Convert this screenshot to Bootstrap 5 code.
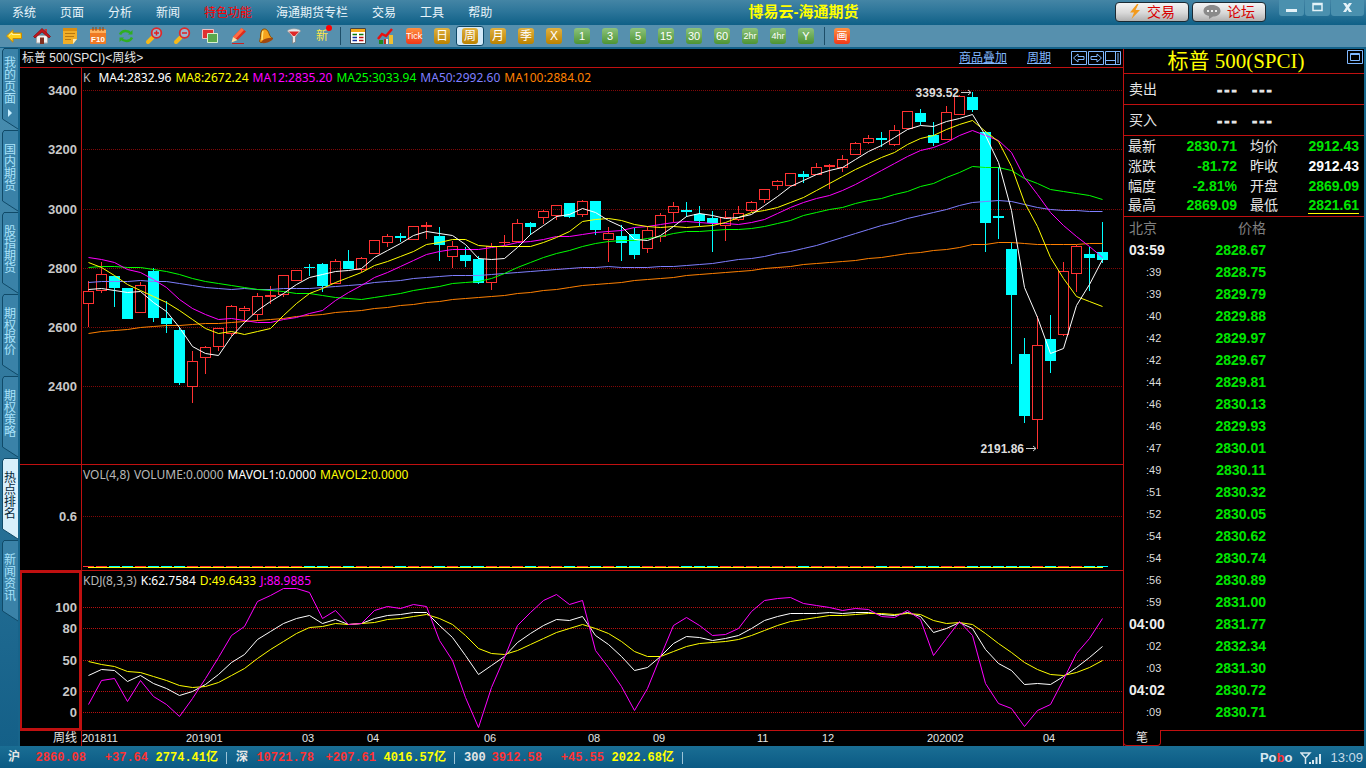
<!DOCTYPE html>
<html lang="zh-CN">
<head>
<meta charset="utf-8">
<meta name="viewport" content="width=device-width, initial-scale=1">
<title>博易云-海通期货</title>
<link href="https://cdn.jsdelivr.net/npm/bootstrap@5.3.0/dist/css/bootstrap.min.css" rel="stylesheet">
<style>
:root{--line:#c01010;--up:#ff3232;--down:#00ffff;--ink:#e6e6e6;--green:#00e600;--frame:#17688d}
body{font-family:"Liberation Sans","Noto Sans CJK SC",sans-serif;font-size:12px;line-height:16px;background:var(--frame);color:var(--ink)}
button{font:inherit;color:inherit;background:none;border:0;padding:0}
a{color:inherit;text-decoration:none}
.titlebar{height:25px;background:linear-gradient(#4485a5,#2d769a 45%,#0f6087)}
.menu-items{gap:24px;padding-left:12px}
.menu-items a{font-size:12px;color:#e8f4fa}
.menu-items a.hot{color:#f00}
.app-title{font-size:15px;font-weight:700;color:#ff0;line-height:24px;margin:0}
.pill{width:74px;height:20px;margin-top:2px;margin-right:3px;border:1px solid #1b2a33;border-radius:4px;background:linear-gradient(#f4f4f4,#d8d8d8 55%,#b0b0b0);color:#d80000;font-size:14px;line-height:18px;gap:6px}
.win-ctl{margin-left:10px;gap:1px;margin-right:2px}
.win-ctl button{width:25px;height:16px;background:#4a90ae;border-radius:0 0 3px 3px}
.win-ctl button:last-child{width:33px}
.toolbar{height:24px;background:#5690ae;border-bottom:2px solid #14628a}
.toolbar button{width:28px;height:20px;margin-top:1px;border:1px solid transparent;border-radius:3px}
.toolbar button.on{background:#d3e9f8;border-color:#0d4766}
.toolbar svg{width:18px;height:18px}
.tile{width:16px;height:16px;border-radius:3px;color:#fff;font-size:11px;line-height:16px;text-align:center;background:linear-gradient(#8cc27c,#4d9434)}
.tile.gold{background:linear-gradient(#e0b040,#bb8200);font-size:12px}
.tile.red{background:linear-gradient(#ff9040,#f03818)}
.tile.slim{font-size:9px}
.new-mark{font-size:12px;color:#ffe84a}
.new-mark i{right:-4px;top:-3px;width:6px;height:6px;background:#f00}
.tool-sep{width:8px;height:18px;margin-top:2px}
.tool-sep::before{content:"";display:block;width:1px;height:100%;margin:0 auto;background:#1d4e68}
.rail{width:20px;margin-top:-1px;background:linear-gradient(#4c90b2,#146088);border-right:2px solid #17648a}
.rail a{width:17px;height:82px;margin-left:1px;padding:14px 2px 0 3px;color:#a9e2fb;line-height:12px;word-break:break-all;
background:url("data:image/svg+xml,%3Csvg xmlns='http://www.w3.org/2000/svg' width='17' height='82'%3E%3Cpath d='M17 .5H3L1.500 3V71L17 81' fill='%233a82a8' stroke='%23104a68'/%3E%3C/svg%3E") no-repeat}
.rail a:first-child{padding-top:9px}
.rail a span{display:block;width:12px}
.rail a.on{color:#062a3c;background-image:url("data:image/svg+xml,%3Csvg xmlns='http://www.w3.org/2000/svg' width='17' height='82'%3E%3Cpath d='M17 .5H3L1.500 3V71L17 81' fill='%23d8effb' stroke='%23104a68'/%3E%3C/svg%3E")}
.board{background:#000}
.chart-head{height:19px;border-bottom:1px solid var(--line);padding:0 1px 0 2px}
.chart-head a{color:#80b8ff;text-decoration:underline}
.pane{display:flex;flex-basis:0;min-height:0;border-bottom:1px solid var(--line)}
.pane-k{flex-grow:396}.pane-vol{flex-grow:105}.pane-kdj{flex-grow:159}
.scale{width:61px;flex:none;font-weight:700;font-size:13px;color:#c8c8c8}
.scale span{right:4px;transform:translateY(-50%)}
.pane-kdj .scale{box-shadow:inset 0 0 0 2px var(--line)}
.plot{border-left:1px solid var(--line);min-width:0}
.plot svg{position:absolute;inset:0;width:100%;height:100%}
.legend{position:absolute;left:1px;top:2px;gap:4px;font-family:"Noto Sans","Open Sans",sans-serif;font-size:12px;color:#b8b8b8;white-space:nowrap}
.peak{position:absolute;transform:translate(-100%,-50%);font-weight:700;color:#ddd}
.axis{height:15px;line-height:15px;font-size:11px}
.axis .lead-cell{width:61px;padding-right:4px;font-size:12px}
.axis .dates span{position:absolute}
.quote{width:241px;border-left:1px solid var(--line);margin-right:2px}
.quote-title{height:25px;border-bottom:1px solid var(--line);font-family:"Liberation Serif","Noto Sans CJK SC",serif;font-size:21px;line-height:24px;color:#ff0}
.quote-title button{right:1px;top:1px}
.bid{height:31px;border-bottom:1px solid var(--line);padding-left:5px;font-size:14px}
.bid b{font-family:"DejaVu Sans Mono",monospace;font-size:12px;width:35px;padding-top:4px;-webkit-text-stroke:1px}
.bid span{width:87px}
.facts{width:100%;border-bottom:1px solid var(--line);font-size:14px;table-layout:fixed}
.facts th{font-weight:400;padding:0}
.facts td{font-weight:700;text-align:right;padding:0;color:var(--green)}
.facts tr{height:20px;line-height:19px}
.facts .lowest{border-bottom:1px solid #ff0}
.ticks{table-layout:fixed;font-size:14px;width:100%}
.ticks tr{height:22px}
.ticks th,.ticks td{padding:0 0 0 5px;line-height:22px}
.ticks thead th{font-weight:400;color:#808080}
.ticks td:first-child{font-size:11px;padding-left:22px;color:#ddd}
.ticks td.minute{font-size:14px;font-weight:700;padding-left:5px;color:#eee}
.ticks td:nth-child(2){color:var(--green);font-weight:700}
.ticks th:nth-child(2),.ticks td:nth-child(2){text-align:right}
.quote-foot{height:16px}
.quote-foot button{width:38px;margin-left:-1px;border:1px solid var(--line);border-top:0;border-radius:0 0 4px 4px;line-height:14px}
.quote-foot div{border-top:1px solid var(--line)}
.status{height:22px;background:linear-gradient(#1a6e94,#0b5a84);font-family:"Liberation Mono","Noto Sans CJK SC",monospace;font-weight:700;padding:2px 0 0 8px}
.index{display:grid;grid-template-columns:20px 58px 62px 70px;text-align:right;padding-right:8px;margin-right:9px;line-height:12px;border-right:1px solid #9cc4d8}
.index span:first-child{text-align:left}
.rise{color:var(--up)}.sum{color:#ff0}
.status .brand{font-family:"Liberation Sans",sans-serif;font-size:13px;color:#d8e8f0}
.status .clock{font-family:"Liberation Sans",sans-serif;font-size:13px;font-weight:400;color:#c8dce8;margin-right:3px}
</style>
</head>
<body class="d-flex flex-column min-vh-100">
<header>
<div class="titlebar d-flex">
<nav class="menu-items d-flex align-items-center"><a href="#">系统</a><a href="#">页面</a><a href="#">分析</a><a href="#">新闻</a><a href="#" class="hot">特色功能</a><a href="#">海通期货专栏</a><a href="#">交易</a><a href="#">工具</a><a href="#">帮助</a></nav>
<h1 class="app-title flex-grow-1 text-center">博易云-海通期货</h1>
<button class="pill d-flex align-items-center justify-content-center"><svg width="12" height="16" viewBox="0 0 12 16"><path d="M8 0 1 8.500h4L2.500 15 11 6H6.500L9.500 0z" fill="#f39a1c"/></svg>交易</button>
<button class="pill d-flex align-items-center justify-content-center"><svg width="18" height="14" viewBox="0 0 18 14"><path d="M9 0c5 0 8.500 2.500 8.500 6S14 11.500 10 11.500L6 14v-3C2.500 10.500.5 8.500.5 6 .5 2.500 4 0 9 0z" fill="#8a8a8a"/><path d="M4 5h2v2H4zM8 5h2v2H8zM12 5h2v2h-2z" fill="#eee"/></svg>论坛</button>
<div class="win-ctl d-flex">
<button aria-label="最小化" class="d-flex justify-content-center"><svg width="11" height="14"><path d="M0 9h11v3H0z" fill="#e4f2f8"/></svg></button>
<button aria-label="最大化" class="d-flex justify-content-center"><svg width="11" height="14"><path d="M1 3.500h9v7H1zM1 4.500h9" fill="none" stroke="#e4f2f8" stroke-width="1.500"/></svg></button>
<button aria-label="关闭" class="d-flex justify-content-center"><svg width="11" height="14"><path d="M1 3h3l1.500 2L7 3h3L7 7.500l3 4.500H7L5.500 9.500 4 12H1l3-4.500z" fill="#e4f2f8"/></svg></button>
</div>
</div>
<div class="toolbar d-flex" role="toolbar">
<button aria-label="后退" class="d-flex align-items-center justify-content-center"><svg viewBox="0 0 18 18"><path d="M1.500 9 8 2.800V6h8.500v5.500H8v3.700z" fill="#ffd21e" stroke="#c98a00"/><path d="M4 8.500 7 6v1.500h8" stroke="#fff3a0" fill="none"/></svg></button>
<button aria-label="首页" class="d-flex align-items-center justify-content-center"><svg viewBox="0 0 18 18"><path d="M3.500 8.500h11V16h-11z" fill="#f2f2f2" stroke="#aaa"/><path d="M11.500 2h2.500v5h-2.500z" fill="#c33"/><path d="M.5 9.500 9 1.500l8.500 8-1.500 1.500L9 5l-7 6z" fill="#c4161c" stroke="#7c0c10" stroke-width=".7"/><path d="M7 10.500h4V17H7z" fill="#803020"/></svg></button>
<button aria-label="笔记" class="d-flex align-items-center justify-content-center"><svg viewBox="0 0 18 18"><path d="M2 1h14v11l-4 5H2z" fill="#f2ae28"/><path d="M2 1h14v3H2z" fill="#d98c10"/><path d="M16 12h-4v5z" fill="#ffe9ae"/><path d="M4 6.500h10M4 9.500h9M4 12.500h6" stroke="#b87810"/></svg></button>
<button aria-label="F10" class="d-flex align-items-center justify-content-center"><svg viewBox="0 0 18 18"><rect x="1" y="2" width="16" height="15" rx="1" fill="#ef7a24"/><path d="M1 3h16v3H1z" fill="#ffb25e"/><path d="M4 0v4M7 0v4M11 0v4M14 0v4" stroke="#984408"/><text x="9" y="14.500" text-anchor="middle" font-size="8" font-weight="700" fill="#fff">F10</text></svg></button>
<button aria-label="刷新" class="d-flex align-items-center justify-content-center"><svg viewBox="0 0 18 18" fill="none" stroke="#2fae22" stroke-width="2.500"><path d="M3 7.500C5 3 11 3 14 6.500M15 10.500c-2 4.500-8 4.500-11 1"/><path d="M15.500 3v4.500H11zM2.500 15v-4.500H7z" fill="#2fae22" stroke="none"/></svg></button>
<button aria-label="放大" class="d-flex align-items-center justify-content-center"><svg viewBox="0 0 18 18"><path d="m7.500 10.500-4.500 4.500" stroke="#f7b818" stroke-width="4" stroke-linecap="round"/><circle cx="11.500" cy="6" r="4.800" fill="#9ab6cc" stroke="#e02828" stroke-width="1.800"/><path d="M9 6h5M11.500 3.500v5" stroke="#e02020" stroke-width="1.500"/></svg></button>
<button aria-label="缩小" class="d-flex align-items-center justify-content-center"><svg viewBox="0 0 18 18"><path d="m7.500 10.500-4.500 4.500" stroke="#f7b818" stroke-width="4" stroke-linecap="round"/><circle cx="11.500" cy="6" r="4.800" fill="#9ab6cc" stroke="#e02828" stroke-width="1.800"/><path d="M9 6h5" stroke="#e02020" stroke-width="1.500"/></svg></button>
<button aria-label="叠加" class="d-flex align-items-center justify-content-center"><svg viewBox="0 0 18 18"><path d="M1.500 2.500h11v9h-11z" fill="#e03030" stroke="#eec0c0"/><path d="M6.500 6.500h10v9h-10z" fill="#5aa84c" stroke="#d8f0d0"/></svg></button>
<button aria-label="画线" class="d-flex align-items-center justify-content-center"><svg viewBox="0 0 18 18"><path d="M12.500 1 17 4.500 8.500 13 4 10z" fill="#e02c1c"/><path d="M12.500 1 15 3 6.500 12 4 10z" fill="#ff6c44"/><path d="m4 10 4.500 3-6 2.500z" fill="#ffe0a0"/><path d="M3 16.500h12" stroke="#d02020"/></svg></button>
<button aria-label="预警" class="d-flex align-items-center justify-content-center"><svg viewBox="0 0 18 18"><path d="M5 3c3-2.500 6 0 7 3.500 1 3 2 4 4 5L5 15.500c-2 .5-3-1-2-3C4 10 3 6 5 3z" fill="#f5a21c" stroke="#8a4a00"/><path d="M6 4c-1 3-.5 6-1 9" stroke="#ffe070" stroke-width="1.500" fill="none"/><ellipse cx="10" cy="13.500" rx="6" ry="2" transform="rotate(-18 10 13.500)" fill="#a04810"/></svg></button>
<button aria-label="筛选" class="d-flex align-items-center justify-content-center"><svg viewBox="0 0 18 18"><path d="M3 4.500 7.500 10v6.500l3-1.500v-5L15 4.500z" fill="#e6e6e6" stroke="#777" stroke-width=".7"/><ellipse cx="9" cy="4" rx="6.500" ry="2.200" fill="#e8e8e8" stroke="#999" stroke-width=".6"/><path d="M4 4.500h10L10 9H8z" fill="#e02828"/></svg></button>
<button class="d-flex align-items-center justify-content-center"><span class="new-mark position-relative">新<i class="position-absolute rounded-circle"></i></span></button>
<span class="tool-sep"></span>
<button aria-label="报价" class="d-flex align-items-center justify-content-center"><svg viewBox="0 0 18 18"><path d="M1.500 1.500h15v15h-15z" fill="#fff" stroke="#444"/><path d="M2 2h14v3H2z" fill="#f5a818"/><path d="M3.500 7.500H8" stroke="#087a08" stroke-width="1.500"/><path d="M10 7.500h4.500" stroke="#087a08" stroke-width="1.500"/><path d="M3.500 10.500H8M3.500 13.500H8" stroke="#1030a0" stroke-width="1.500"/><path d="M10 10.500h4.500M10 13.500h4.500" stroke="#c01010" stroke-width="1.500"/></svg></button>
<button aria-label="走势" class="d-flex align-items-center justify-content-center"><svg viewBox="0 0 18 18"><path d="M2 13h4v4H2z" fill="#208820"/><path d="M7 12h4v5H7z" fill="#c03020"/><path d="M9 12h2v5H9z" fill="#e8e8e8"/><path d="M12 8h4v9h-4z" fill="#f0c030"/><path d="m1 12 4-5 4 2 6-7" fill="none" stroke="#e81010" stroke-width="2.500"/></svg></button>
<button class="d-flex align-items-center justify-content-center"><span class="tile red slim">Tick</span></button>
<button class="d-flex align-items-center justify-content-center"><span class="tile gold">日</span></button>
<button class="on d-flex align-items-center justify-content-center"><span class="tile gold">周</span></button>
<button class="d-flex align-items-center justify-content-center"><span class="tile gold">月</span></button>
<button class="d-flex align-items-center justify-content-center"><span class="tile gold">季</span></button>
<button class="d-flex align-items-center justify-content-center"><span class="tile gold">X</span></button>
<button class="d-flex align-items-center justify-content-center"><span class="tile">1</span></button>
<button class="d-flex align-items-center justify-content-center"><span class="tile">3</span></button>
<button class="d-flex align-items-center justify-content-center"><span class="tile">5</span></button>
<button class="d-flex align-items-center justify-content-center"><span class="tile">15</span></button>
<button class="d-flex align-items-center justify-content-center"><span class="tile">30</span></button>
<button class="d-flex align-items-center justify-content-center"><span class="tile">60</span></button>
<button class="d-flex align-items-center justify-content-center"><span class="tile slim">2hr</span></button>
<button class="d-flex align-items-center justify-content-center"><span class="tile slim">4hr</span></button>
<button class="d-flex align-items-center justify-content-center"><span class="tile">Y</span></button>
<span class="tool-sep"></span>
<button class="d-flex align-items-center justify-content-center"><span class="tile red">画</span></button>
</div>
</header>

<main class="d-flex flex-grow-1">
<nav class="rail flex-shrink-0">
<a href="#" class="d-block"><span>我的页面</span><svg class="d-block mt-1" width="10" height="8"><path d="M4 0l4 4-4 4z" fill="#c8efff"/></svg></a>
<a href="#" class="d-block"><span>国内期货</span></a>
<a href="#" class="d-block"><span>股指期货</span></a>
<a href="#" class="d-block"><span>期权报价</span></a>
<a href="#" class="d-block"><span>期权策略</span></a>
<a href="#" class="d-block on"><span>热点排名</span></a>
<a href="#" class="d-block"><span>新闻资讯</span></a>
</nav>

<section class="board flex-grow-1 d-flex flex-column">
<div class="chart-head d-flex align-items-center">
<span class="me-auto">标普 500(SPCI)&lt;周线&gt;</span>
<a href="#" class="me-3 pe-1">商品叠加</a>
<a href="#" class="me-3 pe-1">周期</a>
<svg width="51" height="16" fill="none" stroke="#80b8ff"><path d="M.5 1.500h15v13H.5zM17.500 1.500h15v13h-15zM34.500 1.500h15v13h-15zM34.500 10.500h10M44.500 2v12M47 3v10" /><path d="M2.500 8 7 4v2.500h6v3H7V12zM30.500 8 26 4v2.500h-6v3h6V12z"/></svg>
</div>
<div class="pane pane-k">
<div class="scale position-relative" data-scale="k"></div>
<div class="plot position-relative flex-grow-1">
<svg id="plotK" viewBox="82 68 1041 396" preserveAspectRatio="none"></svg>
<div class="legend d-flex"><span class="me-1">K</span><span style="color:#fff">MA4:2832.96</span><span style="color:#ff0">MA8:2672.24</span><span style="color:#f0f">MA12:2835.20</span><span style="color:#0f0">MA25:3033.94</span><span style="color:#7f7fff">MA50:2992.60</span><span style="color:#ff8000">MA100:2884.02</span></div>
</div>
</div>
<div class="pane pane-vol">
<div class="scale position-relative" data-scale="vol"></div>
<div class="plot position-relative flex-grow-1">
<svg id="plotVol" viewBox="82 465 1041 105" preserveAspectRatio="none"></svg>
<div class="legend d-flex"><span>VOL(4,8)</span><span>VOLUME:0.0000</span><span style="color:#fff">MAVOL1:0.0000</span><span style="color:#ff0">MAVOL2:0.0000</span></div>
</div>
</div>
<div class="pane pane-kdj">
<div class="scale position-relative" data-scale="kdj"></div>
<div class="plot position-relative flex-grow-1">
<svg id="plotKdj" viewBox="82 571 1041 159" preserveAspectRatio="none"></svg>
<div class="legend d-flex"><span>KDJ(8,3,3)</span><span style="color:#fff">K:62.7584</span><span style="color:#ff0">D:49.6433</span><span style="color:#f0f">J:88.9885</span></div>
</div>
</div>
<div class="axis d-flex"><div class="lead-cell text-end">周线</div><div class="dates plot position-relative flex-grow-1" id="dates"></div></div>
</section>

<aside class="quote board flex-shrink-0 d-flex flex-column">
<div class="quote-title position-relative text-center"><span class="pe-3">标普 500(SPCI)</span><button aria-label="展开" class="position-absolute d-flex"><svg width="16" height="14" fill="none" stroke="#80b8ff"><path d="M.5.500h15v13H.5zM3.500 3.500h9v7h-9zM3.500 4.500h9"/></svg></button></div>
<div class="bid d-flex align-items-center"><span>卖出</span><b>---</b><b>---</b></div>
<div class="bid d-flex align-items-center"><span>买入</span><b>---</b><b>---</b></div>
<table class="facts">
<colgroup><col style="width:43px"><col style="width:70px"><col style="width:13px"><col style="width:40px"><col style="width:69px"><col></colgroup>
<tr><th class="ps-1">最新</th><td>2830.71</td><td></td><th>均价</th><td>2912.43</td><td></td></tr>
<tr><th class="ps-1">涨跌</th><td>-81.72</td><td></td><th>昨收</th><td class="text-white">2912.43</td><td></td></tr>
<tr><th class="ps-1">幅度</th><td>-2.81%</td><td></td><th>开盘</th><td>2869.09</td><td></td></tr>
<tr><th class="ps-1">最高</th><td>2869.09</td><td></td><th>最低</th><td><span class="lowest">2821.61</span></td><td></td></tr>
</table>
<table class="ticks"><colgroup><col style="width:72px"><col style="width:70px"><col></colgroup><thead><tr><th>北京</th><th>价格</th><th></th></tr></thead><tbody id="ticks"></tbody></table>
<div class="quote-foot d-flex mt-auto"><button>笔</button><div class="flex-grow-1"></div></div>
</aside>
</main>

<footer class="status d-flex align-items-center">
<div class="index"><span>沪</span><span class="rise">2860.08</span><span class="rise">+37.64</span><span class="sum">2774.41亿</span></div>
<div class="index"><span>深</span><span class="rise">10721.78</span><span class="rise">+207.61</span><span class="sum">4016.57亿</span></div>
<div class="index"><span>300</span><span class="rise">3912.58</span><span class="rise">+45.55</span><span class="sum">2022.68亿</span></div>
<span class="brand ms-auto">Po<span class="rise">b</span>o</span>
<svg class="mx-2" width="22" height="14" fill="none" stroke="#d8e8f0" stroke-width="1.500"><path d="M1 2h9L5.500 7zM5.500 7v6"/><path d="M10 13v-2M13 13V9M16.500 13V6M20 13V3" stroke-width="2"/></svg>
<span class="clock">13:09</span>
</footer>

<script src="https://cdn.jsdelivr.net/npm/bootstrap@5.3.0/dist/js/bootstrap.bundle.min.js"></script>
<script>
// Candles: direction (r rising, c falling), body top, body bottom, high, low
const candles = `r 291 303 281 326|r 274 290 262 292|c 276 287 276 306|c 288 318 288 318|r 285 312 282 312|c 271 317 268 321|c 318 323 301 332|c 330 382 327 384|r 361 386 351 402|r 347 357 346 373|r 328 346 328 350|r 306 333 305 335|r 308 310 306 321|r 296 314 293 320|r 295 296 286 303|r 275 294 275 296|r 270 280 270 280|c 267 267 264 275|c 264 285 263 291|r 261 283 259 283|c 261 268 250 268|r 258 269 257 271|r 240 253 240 253|r 236 242 234 246|c 236 237 233 241|r 226 239 226 239|r 225 226 222 238|c 236 244 227 260|r 246 256 241 267|c 255 260 247 266|c 259 282 256 283|r 246 282 243 289|r 242 242 235 245|r 223 241 219 241|c 223 226 222 234|r 211 217 210 223|r 205 215 205 219|c 203 216 203 217|r 201 214 200 216|c 201 229 201 234|r 233 239 227 261|c 236 242 225 260|c 234 254 228 258|r 230 248 226 252|r 215 236 213 241|r 206 212 202 221|c 210 211 202 216|c 214 220 206 225|c 218 222 211 251|r 217 225 211 240|r 213 219 206 220|r 202 210 201 211|r 189 199 189 202|r 181 185 180 189|r 173 185 173 185|c 174 176 171 182|r 167 174 163 174|r 165 166 164 188|r 159 167 155 171|r 143 154 142 154|r 138 142 135 143|c 138 139 132 146|r 130 144 125 145|r 111 128 111 128|c 113 121 109 124|c 135 142 122 145|r 112 139 106 139|r 96 114 95 114|c 97 109 92 111|c 132 222 131 251|c 216 217 167 238|c 249 294 242 363|c 354 415 338 422|r 345 419 316 448|c 339 360 315 372|r 271 334 262 335|r 246 273 245 291|c 254 257 247 290|c 252 259 222 262`.split('|').map(s => s.split(' '));
const averages = {
'#ff8000':'333 331 330 329 327 326 325 325 324 323 323 322 321 320 319 318 316 315 314 312 311 310 308 307 305 304 302 301 299 298 297 296 295 293 292 290 289 287 285 284 283 282 280 279 278 277 275 274 273 272 271 270 268 267 266 264 263 262 261 260 258 257 255 253 252 250 249 247 244 244 242 242 243 244 244 244 244 243 243',
'#7f7fff':'282 281 281 281 280 281 281 283 285 287 288 289 288 289 289 288 288 288 287 286 285 284 282 281 280 278 277 276 275 275 275 274 273 272 271 270 269 268 267 267 266 267 267 267 266 266 265 264 263 261 259 258 256 253 251 248 245 241 237 233 229 225 222 218 215 212 209 205 202 201 200 201 204 207 209 210 210 211 211',
'#00ff00':'267 266 266 267 267 269 271 274 278 281 283 285 287 289 290 291 293 293 295 297 298 299 297 295 293 290 288 286 283 282 281 278 273 267 262 257 253 250 246 243 241 240 240 238 236 233 231 231 230 229 229 228 226 223 220 215 212 209 207 203 200 198 194 191 186 183 177 172 166 167 167 170 178 183 189 191 193 195 199',
'#ff00ff':'257 259 262 269 272 279 287 299 308 314 319 318 320 322 322 319 317 313 310 300 292 285 277 272 266 260 254 251 249 249 249 247 245 242 241 239 236 236 234 232 231 230 227 226 224 222 221 222 223 223 224 222 219 213 207 202 198 195 190 184 177 170 163 156 150 147 142 135 130 135 140 152 177 194 212 225 236 246 257',
'#ffff00':'262 267 275 284 290 296 302 310 319 328 333 331 334 331 328 315 303 293 288 282 277 272 265 261 256 251 244 242 239 239 245 246 246 246 246 242 237 231 221 219 218 220 224 226 227 226 227 226 225 222 217 212 210 207 202 197 190 183 176 169 163 157 152 144 138 135 129 124 120 131 141 166 202 226 257 278 296 301 306',
'#ffffff':'289 288 290 292 291 302 311 327 346 353 355 336 322 310 301 293 284 277 274 271 270 268 257 250 243 235 231 233 235 244 258 259 258 247 234 225 216 214 208 212 220 226 239 240 235 226 216 213 215 218 217 214 205 196 186 180 174 170 167 159 151 145 137 129 125 126 121 118 114 135 162 210 287 317 353 348 305 284 259'};
const kdj = {
'#ffffff':'675 669 670 681 675 683 688 695 691 684 674 662 654 639 631 623 618 615 623 619 624 623 618 615 614 612 612 625 637 655 674 665 656 642 633 625 619 620 616 635 644 656 670 667 656 643 636 637 640 638 635 628 620 616 613 613 613 612 613 612 612 614 615 612 616 632 628 622 628 649 663 670 684 683 684 676 667 657 646',
'#ffff00':'661 664 666 671 672 676 680 685 687 686 682 675 668 658 649 641 633 627 626 623 624 623 622 619 618 616 614 618 624 635 648 653 654 650 644 638 632 628 624 628 633 641 651 656 656 651 646 643 642 641 639 635 630 625 621 619 617 615 615 614 613 613 614 613 614 620 623 622 624 633 643 652 662 669 674 675 672 667 660',
'#ff00ff':'704 680 678 701 680 696 704 716 698 678 657 635 626 601 595 588 588 592 618 610 624 623 610 606 608 604 606 640 660 697 727 687 657 625 612 600 594 604 600 650 667 686 710 688 656 625 617 625 635 634 628 611 600 598 597 603 605 607 610 608 609 616 617 610 619 655 638 621 635 683 703 708 726 710 704 679 653 638 618'};
const center = i => 88 + 13 * i;
const bar = (x, y, w, h, fill) => `<rect x="${x}" y="${y}" width="${w}" height="${h}" fill="${fill}"/>`;
const grid = (ys, color) => ys.map(y => `<path d="M83 ${y}.5H1122" stroke="${color}" stroke-dasharray="1 1" vector-effect="non-scaling-stroke" shape-rendering="crispEdges"/>`).join('');
const curve = ([color, ys]) => `<polyline fill="none" stroke="${color}" vector-effect="non-scaling-stroke" points="${ys.split(' ').map((y, i) => `${center(i)}.5,${y}.5`).join(' ')}"/>`;
const candle = ([dir, t, b, h, l], i) => {
  t = +t; b = +b; h = +h; l = +l;
  const x = center(i), c = dir === 'r' ? '#ff3232' : '#00ffff';
  const body = dir === 'c' || b - t < 2 ? bar(x - 5, t, 11, b - t + 1, c)
    : `<rect x="${x - 4.5}" y="${t + .5}" width="10" height="${b - t}" fill="none" stroke="${c}" vector-effect="non-scaling-stroke"/>`;
  return bar(x, h, 1, t - h, c) + body + bar(x, b + 1, 1, Math.max(0, l - b), c);
};
const arrow = (x, y) => `<path d="M${x} ${y}.5h10m-3-2.500 3 2.500-3 2.500" fill="none" stroke="#ccc" vector-effect="non-scaling-stroke"/>`;
const scales = {
  k: [68, 396, {3400:90, 3200:149, 3000:209, 2800:268, 2600:327, 2400:386}],
  vol: [465, 105, {'0.6':516}],
  kdj: [571, 159, {100:607, 80:628, 50:660, 20:691, 0:712}]};
plotK.innerHTML = grid(Object.values(scales.k[2]), '#800808') + '<g shape-rendering="crispEdges">' + candles.map(candle).join('') + '</g>' + Object.entries(averages).map(curve).join('') + arrow(961, 92) + arrow(1026, 448);
plotVol.innerHTML = grid([516], '#800808') + candles.map((c, i) => bar(center(i) - 5, 566, 11, 1, c[0] === 'r' ? '#ff3232' : '#00ffff')).join('') + bar(88, 567, 1015, 1, '#ffff00');
plotKdj.innerHTML = grid(Object.values(scales.kdj[2]), '#b81010') + Object.entries(kdj).map(curve).join('');
document.querySelectorAll('[data-scale]').forEach(el => {
  const [top, height, marks] = scales[el.dataset.scale];
  el.innerHTML = Object.entries(marks).map(([t, y]) => `<span class="position-absolute" style="top:${(y + 1 - top) / height * 100}%">${t}</span>`).join('');
});
plotK.insertAdjacentHTML('afterend', [['3393.52', 959, 93], ['2191.86', 1024, 449]].map(([t, x, y]) => `<span class="peak" style="left:${(x - 82) / 10.41}%;top:${(y - 68) / 3.96}%">${t}</span>`).join(''));
dates.innerHTML = [['201811', 82], ['201901', 186], ['03', 302], ['04', 367], ['06', 484], ['08', 588], ['09', 653], ['11', 757], ['12', 822], ['202002', 927], ['04', 1043]].map(([t, x]) => `<span style="left:${(x - 82) / 10.41}%">${t}</span>`).join('');
ticks.innerHTML = '03:59 2828.67|:39 2828.75|:39 2829.79|:40 2829.88|:42 2829.97|:42 2829.67|:44 2829.81|:46 2830.13|:46 2829.93|:47 2830.01|:49 2830.11|:51 2830.32|:52 2830.05|:54 2830.62|:54 2830.74|:56 2830.89|:59 2831.00|04:00 2831.77|:02 2832.34|:03 2831.30|04:02 2830.72|:09 2830.71'.split('|').map(s => s.split(' ')).map(([t, p]) => `<tr><td${t.length > 3 ? ' class="minute"' : ''}>${t}</td><td>${p}</td><td></td></tr>`).join('');
</script>
</body>
</html>
